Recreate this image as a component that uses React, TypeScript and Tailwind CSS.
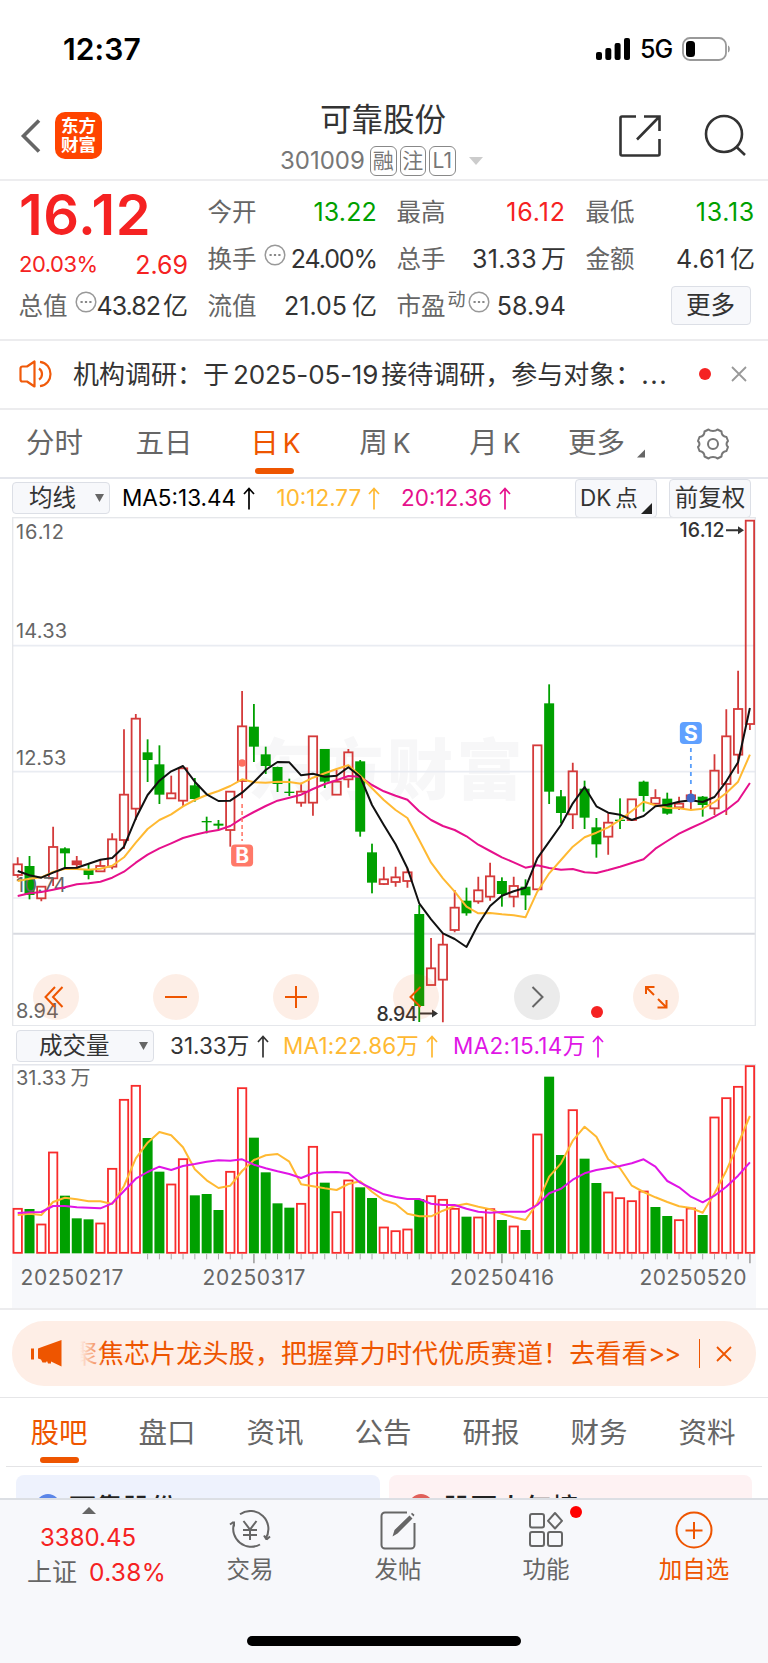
import type { ReactNode } from 'react';

// Horizontal slot of one trading day, shared by the price and volume charts.
const FIRST_X = 5.7;
const STEP = 11.81;
const slotX = (i: number) => FIRST_X + i * STEP;

const RED = '#d43a3a';
const GREEN = '#00a000';

// [up, high, open/close top, open/close bottom, low] in thirds of a pixel
type Candle = [number, number, number, number, number];

const CANDLES: Candle[] = [
  [1, 1042, 1063, 1095, 1103], [0, 1038, 1068, 1155, 1168], [1, 1128, 1130, 1165, 1174],
  [1, 950, 1011, 1105, 1128], [0, 1012, 1015, 1030, 1078], [1, 1038, 1054, 1063, 1075],
  [0, 1060, 1080, 1095, 1108], [1, 1048, 1068, 1084, 1084], [1, 970, 988, 1070, 1078],
  [1, 658, 854, 990, 1017], [1, 612, 626, 896, 930], [0, 688, 727, 750, 816],
  [0, 706, 763, 854, 882], [1, 797, 850, 865, 865], [1, 775, 775, 872, 888],
  [0, 804, 826, 867, 875], [0, 920, 933, 937, 970], [0, 930, 941, 947, 960],
  [1, 845, 845, 960, 1010], [1, 543, 649, 813, 865], [0, 582, 650, 710, 756],
  [0, 710, 733, 768, 792], [0, 770, 771, 822, 846], [0, 806, 845, 849, 858],
  [1, 818, 845, 878, 890], [1, 679, 679, 878, 917], [0, 717, 717, 815, 834],
  [1, 780, 815, 854, 854], [1, 717, 727, 808, 833], [0, 750, 754, 965, 980],
  [0, 1001, 1027, 1118, 1150], [1, 1070, 1108, 1122, 1125], [1, 1070, 1102, 1116, 1130],
  [1, 1075, 1087, 1113, 1133], [0, 1185, 1212, 1488, 1536], [1, 1284, 1375, 1425, 1425],
  [1, 1272, 1304, 1409, 1537], [1, 1140, 1193, 1260, 1267], [0, 1133, 1172, 1210, 1217],
  [1, 1100, 1141, 1174, 1181], [1, 1058, 1099, 1160, 1172], [0, 1102, 1113, 1152, 1190],
  [1, 1100, 1128, 1160, 1192], [0, 1108, 1130, 1156, 1200], [1, 706, 706, 1138, 1138],
  [0, 523, 580, 845, 882], [0, 840, 859, 909, 940], [1, 758, 784, 913, 957],
  [0, 812, 836, 923, 957], [0, 924, 952, 1003, 1043], [1, 910, 938, 980, 1034],
  [0, 865, 929, 933, 957], [1, 868, 868, 930, 930], [0, 812, 815, 858, 905],
  [1, 838, 864, 881, 890], [0, 848, 866, 911, 914], [1, 860, 881, 892, 900],
  [1, 840, 856, 866, 897], [0, 858, 860, 885, 920], [1, 733, 782, 895, 915],
  [1, 598, 679, 822, 915], [1, 482, 597, 734, 791], [1, 32, 32, 642, 660],
];

const MA5 = [
  1083, 1096, 1103, 1088, 1074, 1073, 1061, 1049, 1044, 1010, 925, 855, 812, 784, 768, 815, 853, 873, 872, 848, 816,
  780, 756, 757, 796, 791, 800, 797, 772, 800, 885, 945, 1003, 1075, 1180, 1228, 1270, 1287, 1311, 1243, 1188, 1157,
  1144, 1133, 1045, 995, 945, 880, 831, 889, 908, 914, 930, 918, 889, 884, 875, 871, 876, 861, 814, 757, 594,
];
const MA10 = [
  1113, 1106, 1102, 1086, 1076, 1077, 1079, 1076, 1067, 1042, 998, 957, 930, 913, 889, 870, 855, 843, 828, 808, 817,
  818, 815, 816, 821, 803, 790, 777, 766, 797, 835, 870, 900, 924, 990, 1058, 1105, 1145, 1190, 1210, 1209, 1213,
  1216, 1222, 1145, 1090, 1050, 1010, 982, 968, 952, 930, 903, 875, 886, 894, 895, 900, 896, 876, 849, 815, 734,
];
const MA20 = [
  1158, 1150, 1146, 1139, 1132, 1123, 1120, 1115, 1103, 1085, 1058, 1034, 1015, 1000, 984, 974, 966, 960, 948, 925,
  906, 888, 872, 863, 854, 837, 822, 811, 798, 800, 825, 844, 857, 869, 904, 930, 948, 960, 979, 1004, 1023, 1042,
  1057, 1073, 1066, 1074, 1079, 1077, 1087, 1089, 1080, 1070, 1059, 1048, 1016, 993, 971, 954, 938, 920, 900, 872, 819,
];

const VOLUME = [
  565, 567, 612, 396, 527, 595, 598, 609, 445, 238, 196, 354, 455, 492, 416, 526, 522, 570, 454, 203, 353, 457, 550,
  563, 550, 379, 488, 575, 480, 502, 534, 621, 632, 627, 537, 527, 538, 565, 590, 591, 566, 600, 618, 630, 342, 170,
  405, 269, 416, 489, 516, 533, 542, 513, 561, 588, 599, 564, 585, 291, 233, 199, 137,
];
// Days whose volume bar is green; differs from the candles on a few days.
const VOL_DOWN = [1, 4, 5, 6, 11, 12, 15, 16, 17, 20, 21, 22, 23, 26, 29, 30, 34, 38, 41, 43, 45, 46, 48, 49, 54, 55, 58];
const VOL_MA1 = [
  585, 581, 585, 546, 533, 538, 544, 544, 552, 498, 415, 368, 336, 346, 382, 448, 481, 504, 497, 453, 420, 406, 402,
  425, 493, 499, 505, 510, 492, 484, 515, 541, 552, 581, 589, 589, 572, 558, 551, 560, 568, 581, 592, 600, 550, 470,
  430, 362, 320, 350, 418, 445, 497, 516, 532, 546, 559, 564, 578, 520, 452, 372, 288,
];
const VOL_MA2 = [
  579, 577, 576, 558, 558, 562, 563, 565, 550, 513, 476, 456, 440, 450, 438, 432, 425, 421, 422, 418, 434, 445, 454,
  462, 474, 460, 457, 456, 459, 488, 506, 523, 531, 537, 537, 551, 555, 555, 566, 575, 578, 576, 575, 575, 555, 520,
  506, 479, 460, 450, 444, 438, 430, 418, 440, 483, 502, 530, 547, 527, 500, 467, 427,
];

const priceY = (v: number) => v / 3 - 7;
const volY = (v: number) => v / 3 - 44;

const line = (data: number[], y: (v: number) => number) =>
  data.map((v, i) => `${slotX(i).toFixed(1)},${y(v).toFixed(1)}`).join(' ');

export default function App() {
  return (
    <div className="w-[768px] h-[1663px] overflow-hidden flex flex-col bg-white text-[#333] font-[Inter,'Noto_Sans_CJK_SC',sans-serif]">
      <StatusBar />
      <Header />
      <Quote />
      <News />
      <PeriodTabs />
      <PriceIndicators />
      <PriceChart />
      <VolumeIndicators />
      <VolumeChart />
      <Banner />
      <InfoTabs />
      <Cards />
      <BottomBar />
    </div>
  );
}

function StatusBar() {
  return (
    <div className="h-[94px] shrink-0 flex items-center justify-between pl-[63px] pr-[36px] pt-[4px] text-black">
      <span className="text-[30px] font-semibold tracking-[0.1px]">12:37</span>
      <div className="flex items-center">
        <svg width="34" height="24" viewBox="0 0 34 24">
          <rect x="0" y="15" width="6" height="8" rx="2" />
          <rect x="9.3" y="11" width="6" height="12" rx="2" />
          <rect x="18.6" y="6" width="6" height="17" rx="2" />
          <rect x="28" y="1" width="6" height="22" rx="2" />
        </svg>
        <span className="ml-[10px] w-[34px] text-[25px] font-medium tracking-[-1px] leading-none">5G</span>
        <svg className="ml-[8px]" width="50" height="24" viewBox="0 0 50 24" fill="none">
          <rect x="1" y="1" width="43" height="22" rx="7" stroke="#999" strokeWidth="1.8" />
          <rect x="4" y="4" width="9" height="16" rx="3.5" fill="#000" />
          <path d="M46 8.5c2.4.6 2.4 6.4 0 7z" fill="#999" />
        </svg>
      </div>
    </div>
  );
}

function Tag({ children }: { children: ReactNode }) {
  return (
    <span className="w-[26.5px] h-[30px] mr-[3px] shrink-0 flex items-center justify-center rounded-[6px] border-[1.5px] border-[#888] text-[21px] text-[#777]">
      {children}
    </span>
  );
}

function Header() {
  return (
    <div className="h-[87px] shrink-0 flex items-start border-b-2 border-[#ededef]">
      <svg className="ml-[20px] mt-[25px]" width="21" height="34" viewBox="0 0 21 34" fill="none" stroke="#666" strokeWidth="3.6">
        <path d="M19 1.5L3.5 17L19 32.5" />
      </svg>
      <div className="ml-[14px] mt-[18px] w-[47px] h-[47px] rounded-[10px] bg-[#ff4400] text-white text-[17.5px] font-bold leading-[19px] flex flex-col items-center justify-center pb-px">
        <span>东方</span>
        <span>财富</span>
      </div>
      <div className="ml-[178px] w-[206px] flex flex-col">
        <span className="self-center text-[31.5px] leading-[52px]">可靠股份</span>
        <div className="h-[30px] flex items-center whitespace-nowrap">
          <span className="w-[90px] shrink-0 text-[24px] text-[#777]">301009</span>
          <Tag>融</Tag>
          <Tag>注</Tag>
          <Tag>L1</Tag>
          <svg className="ml-[10px] shrink-0" width="14" height="8" viewBox="0 0 14 8" fill="#ccc">
            <path d="M0 0h14L7 8z" />
          </svg>
        </div>
      </div>
      <svg className="ml-[132px] mt-[20px]" width="44" height="44" viewBox="0 0 44 44" fill="none" stroke="#333" strokeWidth="2.6">
        <path d="M18 2.5H4a1.5 1.5 0 0 0-1.5 1.5v36A1.5 1.5 0 0 0 4 41.5h36a1.5 1.5 0 0 0 1.5-1.5V25M26 2.5h15.5V17M41 3L19 25.5" />
      </svg>
      <svg className="ml-[42px] mt-[20px]" width="44" height="44" viewBox="0 0 44 44" fill="none" stroke="#333" strokeWidth="2.6">
        <circle cx="20" cy="20" r="18" />
        <path d="M32 32.5L41 41" />
      </svg>
    </div>
  );
}

function Dots() {
  return (
    <svg className="shrink-0 mb-[10px]" width="22" height="22" viewBox="0 0 22 22" fill="none">
      <circle cx="11" cy="11" r="9.8" stroke="#999" strokeWidth="1.5" />
      <path d="M5.5 11h2.2M9.900 11h2.2M14.3 11h2.2" stroke="#888" strokeWidth="2" />
    </svg>
  );
}

function Stat({ label, value, unit, className = '', dots, sup }: {
  label: string;
  value: string;
  unit?: string;
  className?: string;
  dots?: boolean;
  sup?: string;
}) {
  return (
    <div className="flex items-center whitespace-nowrap">
      <span className="text-[24.5px] text-[#666] ml-[-0.5px]">{label}</span>
      {sup && <span className="text-[18px] text-[#666] mb-[14px] ml-[2px]">{sup}</span>}
      {dots && <span className={sup ? 'ml-[2px] flex' : 'ml-[7px] flex'}><Dots /></span>}
      <span className={`ml-auto text-[25px] ${className}`}>{value}</span>
      {unit && <span className="text-[25px]">{unit}</span>}
    </div>
  );
}

function Quote() {
  return (
    <div className="h-[159.5px] shrink-0 border-b-2 border-[#ececee] pt-[8px] pl-[19px] pr-[13px] grid grid-cols-[169px_169px_169px_169px] grid-rows-[47px_47px_47px] gap-x-[20px]">
      <div className="flex items-center pt-[5px] text-[56px] font-semibold leading-none tracking-[0.6px] text-[#f52222]">16.12</div>
      <Stat label="今开" value="13.22" className="tracking-[0.15px] text-[#00a000]" />
      <Stat label="最高" value="16.12" className="tracking-[0.9px] text-[#f52222]" />
      <Stat label="最低" value="13.13" className="tracking-[0.7px] text-[#00a000]" />
      <div className="flex items-center justify-between pt-[9px] text-[#f52222]">
        <span className="text-[22px] tracking-[-0.5px]">20.03%</span>
        <span className="text-[25px] pt-[4px]">2.69</span>
      </div>
      <Stat label="换手" value="24.00%" className="tracking-[-1.1px]" dots />
      <Stat label="总手" value="31.33" unit="万" className="tracking-[0.4px] mr-[4px]" />
      <Stat label="金额" value="4.61" unit="亿" className="tracking-[0.6px] mr-[4px]" />
      <Stat label="总值" value="43.82" unit="亿" className="tracking-[-1px] mr-[3px]" dots />
      <Stat label="流值" value="21.05" unit="亿" className="mr-[5px]" />
      <Stat label="市盈" value="58.94" className="tracking-[0.1px]" sup="动" dots />
      <div className="flex items-center justify-end pr-[4.5px] pb-[2px]">
        <button className="w-[80px] h-[39px] rounded-[4px] border-[1.5px] border-[#dcdfe6] bg-[#f7f8fb] text-[24.5px] leading-none">更多</button>
      </div>
    </div>
  );
}

function Cross({ size, color }: { size: number; color: string }) {
  return (
    <svg className="shrink-0" width={size} height={size} viewBox="0 0 16 16" fill="none" stroke={color} strokeWidth="1.8">
      <path d="M1 1l14 14M15 1L1 15" />
    </svg>
  );
}

function News() {
  return (
    <div className="h-[69.5px] shrink-0 border-b-2 border-[#ececee] flex items-center pl-[19px] pr-[21px]">
      <svg width="34" height="28" viewBox="0 0 34 28" fill="none" stroke="#f05a0a" strokeWidth="2.2">
        <path d="M15.5 1.5v25L8 21.5H3.5A2 2 0 0 1 1.5 19.5v-11a2 2 0 0 1 2-2H8z" strokeLinejoin="round" />
        <path d="M20 8.5c4 2.5 4 8.500 0 11M21 1.8c14 2 14 22.400 0 24.400" />
      </svg>
      <div className="ml-[20px] w-[600px] text-[26px] whitespace-nowrap">
        机构调研：于<span className="ml-[4px] mr-[3px] tracking-[-0.15px]">2025-05-19</span>接待调研，参与对象：
        <span className="tracking-[1.5px]">...</span>
      </div>
      <span className="ml-auto mr-[20px] w-[12px] h-[12px] rounded-full bg-[#f52222]" />
      <Cross size={16} color="#999" />
    </div>
  );
}

function PeriodTabs() {
  return (
    <div className="h-[69px] shrink-0 border-b-2 border-[#e4e6ec] flex items-center text-[28.5px] text-[#666] whitespace-nowrap">
      <span className="w-[109px] text-center shrink-0">分时</span>
      <span className="w-[110px] text-center shrink-0">五日</span>
      <span className="relative w-[113px] text-center shrink-0 text-[#ee5500]">
        日<span className="ml-[4px] text-[26.5px]">K</span>
        <span className="absolute left-[36px] bottom-[-9px] w-[39px] h-[6px] rounded-[3px] bg-[#ee5500]" />
      </span>
      <span className="w-[106px] text-center shrink-0">周<span className="ml-[5px] text-[26.5px]">K</span></span>
      <span className="w-[114px] text-center shrink-0">月<span className="ml-[5px] text-[26.5px]">K</span></span>
      <span className="w-[69px] ml-[16px] shrink-0">更多</span>
      <svg className="mt-[20px]" width="8" height="9" viewBox="0 0 9 9" fill="#666"><path d="M9 0v9H0z" /></svg>
      <svg className="ml-[51px]" width="34" height="32" viewBox="0 0 34 32" fill="none" stroke="#777" strokeWidth="2">
        <path d="M12.5 1.500c2 2 7 2 9 0l4 2c0 3 2 5 5 5.500l1.500 4c-2 2-2 4 0 6l-1.500 4c-3 .5-5 2.500-5 5.500l-4 2c-2-2-7-2-9 0l-4-2c0-3-2-5-5-5.500l-1.500-4c2-2 2-4 0-6l1.500-4c3-.5 5-2.500 5-5.500z" strokeLinejoin="round" />
        <circle cx="17" cy="16" r="5" />
      </svg>
    </div>
  );
}

function UpArrow() {
  return (
    <svg className="shrink-0" width="12" height="23" viewBox="0 0 12 23" fill="none" stroke="currentColor" strokeWidth="1.7">
      <path d="M6 22.5V1.5M1 7l5-5.5L11 7" />
    </svg>
  );
}

function Select({ label, className }: { label: string; className: string }) {
  return (
    <div className={`h-[32px] shrink-0 flex items-center justify-between rounded-[4px] border-[1.5px] border-[#dcdfe6] bg-[#f7f8fb] text-[23.5px] ${className}`}>
      {label}
      <svg width="9" height="8" viewBox="0 0 9 8" fill="#666"><path d="M0 0h9L4.5 8z" /></svg>
    </div>
  );
}

function PriceIndicators() {
  return (
    <div className="h-[38px] shrink-0 flex items-center pl-[12px] text-[22.5px] whitespace-nowrap">
      <Select label="均线" className="w-[98px] pl-[16px] pr-[5px]" />
      <div className="ml-[12px] w-[154.5px] flex items-center gap-[5px] text-black">
        <span className="w-[116px]">MA5:13.44</span>
        <UpArrow />
      </div>
      <div className="w-[124.5px] flex items-center gap-[5px] text-[#ffb932]">
        <span className="w-[86px]">10:12.77</span>
        <UpArrow />
      </div>
      <div className="w-[174px] flex items-center gap-[6px] text-[#e6108c]">
        <span className="w-[92px]">20:12.36</span>
        <UpArrow />
      </div>
      <div className="relative h-[39px] w-[82px] pl-[4px] flex items-center rounded-[4px] border-[1.5px] border-[#dcdfe6] bg-[#f7f8fb]">
        DK<span className="ml-[4px]">点</span>
        <svg className="absolute right-[4px] bottom-[3px]" width="11" height="11" viewBox="0 0 11 11" fill="#222"><path d="M11 0v11H0z" /></svg>
      </div>
      <div className="ml-[12px] h-[39px] w-[82px] flex items-center justify-center rounded-[4px] border-[1.5px] border-[#dcdfe6] bg-[#f7f8fb] text-[23.5px]">
        前复权
      </div>
    </div>
  );
}

function RoundButton({ className, children }: { className: string; children: ReactNode }) {
  return (
    <button className={`absolute top-[457px] w-[46px] h-[46px] rounded-full flex items-center justify-center ${className}`}>
      <svg width="46" height="46" viewBox="0 0 46 46" fill="none" stroke="currentColor" strokeWidth="2">
        {children}
      </svg>
    </button>
  );
}

function PriceChart() {
  return (
    <div className="relative h-[509px] w-[744px] ml-[12px] shrink-0">
      <svg width="744" height="509" viewBox="0 0 744 509" className="block">
        <text x="236" y="277" fontSize="66" fontWeight="900" letterSpacing="3.5" fill="#f7f7f8">东方财富</text>
        <path d="M0 128.7H744M0 254.7H744M0 381H744" stroke="#e9ecf2" strokeWidth="1.7" />
        <path d="M0 416.7H744" stroke="#d8dae0" strokeWidth="2" />
        <rect x="0.7" y="0.7" width="742.6" height="508" fill="none" stroke="#e4e6ea" strokeWidth="1.3" />
        {CANDLES.map(([up, high, top, bottom, low], i) => {
          const x = slotX(i);
          return up ? (
            <g key={i} stroke={RED} strokeWidth="1.8" fill="none">
              <path d={`M${x} ${priceY(high)}V${priceY(top)}M${x} ${priceY(bottom)}V${priceY(low)}`} />
              <rect x={x - 4.2} y={priceY(top)} width="8.4" height={priceY(bottom) - priceY(top)} />
            </g>
          ) : (
            <g key={i} fill={GREEN}>
              <rect x={x - 0.9} y={priceY(high)} width="1.8" height={(low - high) / 3} />
              <rect x={x - 5} y={priceY(top)} width="10" height={(bottom - top) / 3} />
            </g>
          );
        })}
        <path d={`M${slotX(5) - 4.5} ${priceY(1059)}h9`} stroke={RED} strokeWidth="4" />
        <g fontSize="20" fill="#666">
          <text x="4" y="21.5" letterSpacing="0.9">16.12</text>
          <text x="4" y="121" letterSpacing="0.2">14.33</text>
          <text x="4" y="248">12.53</text>
          <text x="4" y="375" letterSpacing="0.4">10.74</text>
          <text x="4" y="501">8.94</text>
        </g>
        <g fill="none" strokeWidth="2" strokeLinejoin="round">
          <polyline points={line(MA20, priceY)} stroke="#e6108c" />
          <polyline points={line(MA10, priceY)} stroke="#ffb932" />
          <polyline points={line(MA5, priceY)} stroke="#111" />
        </g>

        {/* buy marker */}
        <circle cx={slotX(19)} cy="246" r="3.8" fill="#ff7060" />
        <path d={`M${slotX(19)} 287v37`} stroke="#ff7060" strokeWidth="1.5" strokeDasharray="4 3" />
        <rect x={slotX(19) - 11} y="327.5" width="22" height="22" rx="4" fill="#ff7969" />
        <text x={slotX(19)} y="346" fontSize="21" fontWeight="700" fill="#fff" textAnchor="middle">B</text>
        {/* sell marker */}
        <circle cx={slotX(57)} cy="281" r="4.5" fill="#4169c8" />
        <path d={`M${slotX(57)} 231v37`} stroke="#5a9ffa" strokeWidth="1.8" strokeDasharray="4 4" />
        <rect x={slotX(57) - 11} y="205" width="22" height="22" rx="4" fill="#5fa0ff" />
        <text x={slotX(57)} y="223.5" fontSize="21" fontWeight="700" fill="#fff" textAnchor="middle">S</text>

        <g fontSize="19.5" fill="#333" stroke="none" fontWeight="500">
          <text x="667.5" y="20" textLength="45">16.12</text>
          <text x="364.5" y="503.5" textLength="41">8.94</text>
          <path d="M714 12.2h12v-3l6 4-6 4v-3h-12zM408 495.500h12v-3l6 4-6 4v-3h-12z" />
        </g>
      </svg>
      <RoundButton className="left-[21px] bg-[#f05a0a]/10 text-[#ee5500]">
        <path d="M22 13L12.5 23L22 33M29.5 13L20 23L29.5 33" />
      </RoundButton>
      <RoundButton className="left-[141px] bg-[#f05a0a]/10 text-[#ee5500]">
        <path d="M12 23H34" />
      </RoundButton>
      <RoundButton className="left-[261px] bg-[#f05a0a]/10 text-[#ee5500]">
        <path d="M12 23H34M23 12V34" />
      </RoundButton>
      <RoundButton className="left-[381px] bg-[#f05a0a]/10 text-[#ee5500]">
        <path d="M27.5 13L17.5 23L27.5 33" />
      </RoundButton>
      <RoundButton className="left-[502px] bg-[#ebebeb] text-[#666]">
        <path d="M18.5 13L28.5 23L18.5 33" />
      </RoundButton>
      <RoundButton className="left-[621px] bg-[#f05a0a]/10 text-[#ee5500]">
        <path d="M13 20V13H21.5M13 13L21 21M33.5 26V33.5H24.5M33.5 33.5L25 25" />
      </RoundButton>
      <span className="absolute left-[578.5px] top-[488.5px] w-[12px] h-[12px] rounded-full bg-[#f52222]" />
    </div>
  );
}

function VolumeIndicators() {
  return (
    <div className="h-[38px] shrink-0 flex items-center pl-[16px] pt-[2px] text-[22.5px] whitespace-nowrap">
      <Select label="成交量" className="w-[138px] pl-[22px] pr-[5px]" />
      <div className="ml-[16px] w-[113px] flex items-center gap-[7px]">
        <span className="w-[80px]">31.33万</span>
        <UpArrow />
      </div>
      <div className="w-[170px] flex items-center gap-[5px] text-[#ffb932]">
        <span className="w-[138px] tracking-[0.15px]">MA1:22.86万</span>
        <UpArrow />
      </div>
      <div className="flex items-center gap-[6px] text-[#e015e6]">
        <span className="w-[133px] tracking-[0.35px]">MA2:15.14万</span>
        <UpArrow />
      </div>
    </div>
  );
}

function VolumeChart() {
  const base = volY(700);
  return (
    <div className="h-[245.5px] shrink-0 border-b-2 border-[#ececee] pl-[12px]">
      <svg width="744" height="244" viewBox="0 0 744 244" className="block">
        <rect y={base} width="744" height="56" fill="#f7f8fb" />
        <path d={`M0.7 ${base}V0.7H743.3V${base}`} fill="none" stroke="#e4e6ec" strokeWidth="1.4" />
        <text x="4" y="21" fontSize="20" fill="#666">31.33<tspan dx="4">万</tspan></text>
        {VOLUME.map((v, i) =>
          VOL_DOWN.includes(i) ? (
            <rect key={i} x={slotX(i) - 5} y={volY(v)} width="10" height={base - volY(v)} fill={GREEN} />
          ) : (
            <rect key={i} x={slotX(i) - 4.2} y={volY(v) + 0.5} width="8.4" height={base - volY(v) - 1} fill="none" stroke="#f82c2c" strokeWidth="1.8" />
          ),
        )}
        {VOLUME.map((_, i) =>
          i < 11 ? null : (
            <path key={i} d={`M${slotX(i)} ${base + 0.5}v${(i + 1) % 21 === 0 ? 9.5 : 5.5}`} stroke="#aaa" strokeWidth={(i + 1) % 21 === 0 ? 1.8 : 1} />
          ),
        )}
        <g fill="none" strokeWidth="2" strokeLinejoin="round">
          <polyline points={line(VOL_MA1, volY)} stroke="#ffb932" />
          <polyline points={line(VOL_MA2, volY)} stroke="#e015e6" />
        </g>
        <g fontSize="21" fill="#666">
          <text x="8.5" y="221" textLength="103">20250217</text>
          <text x="190.5" y="221" textLength="103">20250317</text>
          <text x="438" y="221" textLength="104">20250416</text>
          <text x="627.5" y="221" textLength="107">20250520</text>
        </g>
      </svg>
    </div>
  );
}

function Banner() {
  return (
    <div className="h-[88px] shrink-0 border-b-[1.5px] border-[#e6e6e8] px-[12px] pt-[11.5px]">
      <div className="h-[65px] rounded-[32px] bg-[#feeee6] text-[#ee5500] flex items-center pl-[19px] pr-[24px]">
        <svg width="31" height="27" viewBox="0 0 31 27" fill="currentColor">
          <path d="M0 8.5h3v11H0zM30.5 0v26.5L20 21.5v2h-3L16 21l-1 1.5h-3.5L10 19.5 7 18.5V8.5L11 7z" />
        </svg>
        <div className="relative ml-[18px] w-[603px] overflow-hidden text-[26px] whitespace-nowrap">
          <span className="ml-[-8.5px] tracking-[0.2px]">聚焦芯片龙头股，把握算力时代优质赛道！去看看</span>
          <span className="tracking-[-1px]">&gt;&gt;</span>
          <span className="absolute left-0 top-0 w-[22px] h-full bg-gradient-to-r from-[#feeee6] to-[#feeee6]/20" />
        </div>
        <span className="ml-auto mr-[16px] w-[1.5px] h-[29px] bg-[#ee5500]" />
        <Cross size={16} color="#ee5500" />
      </div>
    </div>
  );
}

function InfoTabs() {
  const tabs = ['股吧', '盘口', '资讯', '公告', '研报', '财务', '资料'];
  return (
    <div className="h-[69px] shrink-0 mx-[6px] border-b-[1.5px] border-[#e4e4e6] flex text-[28.5px]">
      {tabs.map((t, i) => (
        <span
          key={t}
          className={`relative left-[-1px] w-[108px] shrink-0 text-center leading-[70px] ${i === 0 ? 'text-[#ee5500]' : 'text-[#666]'}`}
        >
          {t}
          {i === 0 && <span className="absolute left-[35px] bottom-[3px] w-[39px] h-[6px] rounded-[3px] bg-[#ee5500]" />}
        </span>
      ))}
    </div>
  );
}

function Cards() {
  return (
    <div className="h-[31px] shrink-0 overflow-hidden pl-[16px] pr-[16px] pt-[8.5px] flex gap-[9px] text-[27px] font-medium leading-[36px] text-[#222]">
      <div className="w-[363.5px] h-[80px] shrink-0 rounded-[8px] bg-[#eef2fd] pl-[20px] pt-[16px] flex gap-[9px]">
        <span className="mt-[3px] w-[24px] h-[24px] rounded-full bg-[#5a85e8]" />
        可靠股份
      </div>
      <div className="w-[363.5px] h-[80px] shrink-0 rounded-[8px] bg-[#fef2f3] pl-[20px] pt-[16px] flex gap-[11px]">
        <span className="mt-[3px] w-[24px] h-[24px] rounded-full bg-[#e0605a]" />
        股票人气榜
      </div>
    </div>
  );
}

function NavItem({ label, children, className = 'text-[#666]' }: { label: string; children: ReactNode; className?: string }) {
  return (
    <div className={`relative w-[148px] flex flex-col items-center ${className}`}>
      <svg className="mt-[10px]" width="42" height="40" viewBox="0 0 42 40" fill="none" stroke="currentColor" strokeWidth="2">
        {children}
      </svg>
      <span className="mt-[4px] text-[23.5px] leading-[32px]">{label}</span>
    </div>
  );
}

function BottomBar() {
  return (
    <div className="h-[167px] shrink-0 border-t-2 border-[#dcdfe4] bg-[#f7f8fb] flex flex-col">
      <div className="h-[110px] flex whitespace-nowrap">
        <div className="w-[176px] flex flex-col">
          <svg className="ml-[82px] mt-[7px]" width="14" height="7" viewBox="0 0 14 7" fill="#666"><path d="M0 7h14L7 0z" /></svg>
          <span className="ml-[40px] mt-[9px] text-[24px] leading-[30px] text-[#f52222]">3380.45</span>
          <div className="ml-[27px] mt-[2px] flex items-center text-[25px] leading-[34px] text-[#666]">
            上证<span className="ml-[12px] text-[24.5px] tracking-[0.3px] text-[#f52222]">0.38%</span>
          </div>
        </div>
        <NavItem label="交易">
          <path d="M11 4.3a18 18 0 0 1 25.5 24.5M37.5 29.5l3.5-3M37.5 29.5l-2.5-4M31 34.5A18 18 0 0 1 5 13.5M4.5 12L1 14.500M5 11.5v5" />
          <path d="M14.5 11l6.5 8.5L27.5 11M21 19.5V30M14 20h14M14 25h14" />
        </NavItem>
        <NavItem label="发帖">
          <path d="M30 2.5H8A3.5 3.5 0 0 0 4.5 6v29A3.5 3.5 0 0 0 8 38.500h26a3.5 3.5 0 0 0 3.5-3.5V13" />
          <path d="M15.5 26.5l2-6.5L32.5 5.5l3 3L20.5 23.5zM34 4l1-1.2 2.5 2L36.5 6.5z" fill="currentColor" stroke="none" />
        </NavItem>
        <div className="relative">
          <NavItem label="功能">
            <rect x="5" y="4" width="14" height="13.5" rx="2" />
            <rect x="5" y="22" width="14" height="14" rx="2" />
            <rect x="23" y="22" width="14" height="14" rx="2" />
            <path d="M30 3l7 7.8-7 7.7-7-7.7z" strokeLinejoin="round" />
          </NavItem>
          <span className="absolute left-[98px] top-[6px] w-[12px] h-[12px] rounded-full bg-[#ff0000]" />
        </div>
        <NavItem label="加自选" className="text-[#ee5500]">
          <circle cx="21" cy="20" r="17.5" />
          <path d="M12.5 20.5h17M21 12v17" />
        </NavItem>
      </div>
      <div className="mt-[26px] self-center w-[274px] h-[10px] rounded-full bg-black" />
    </div>
  );
}
